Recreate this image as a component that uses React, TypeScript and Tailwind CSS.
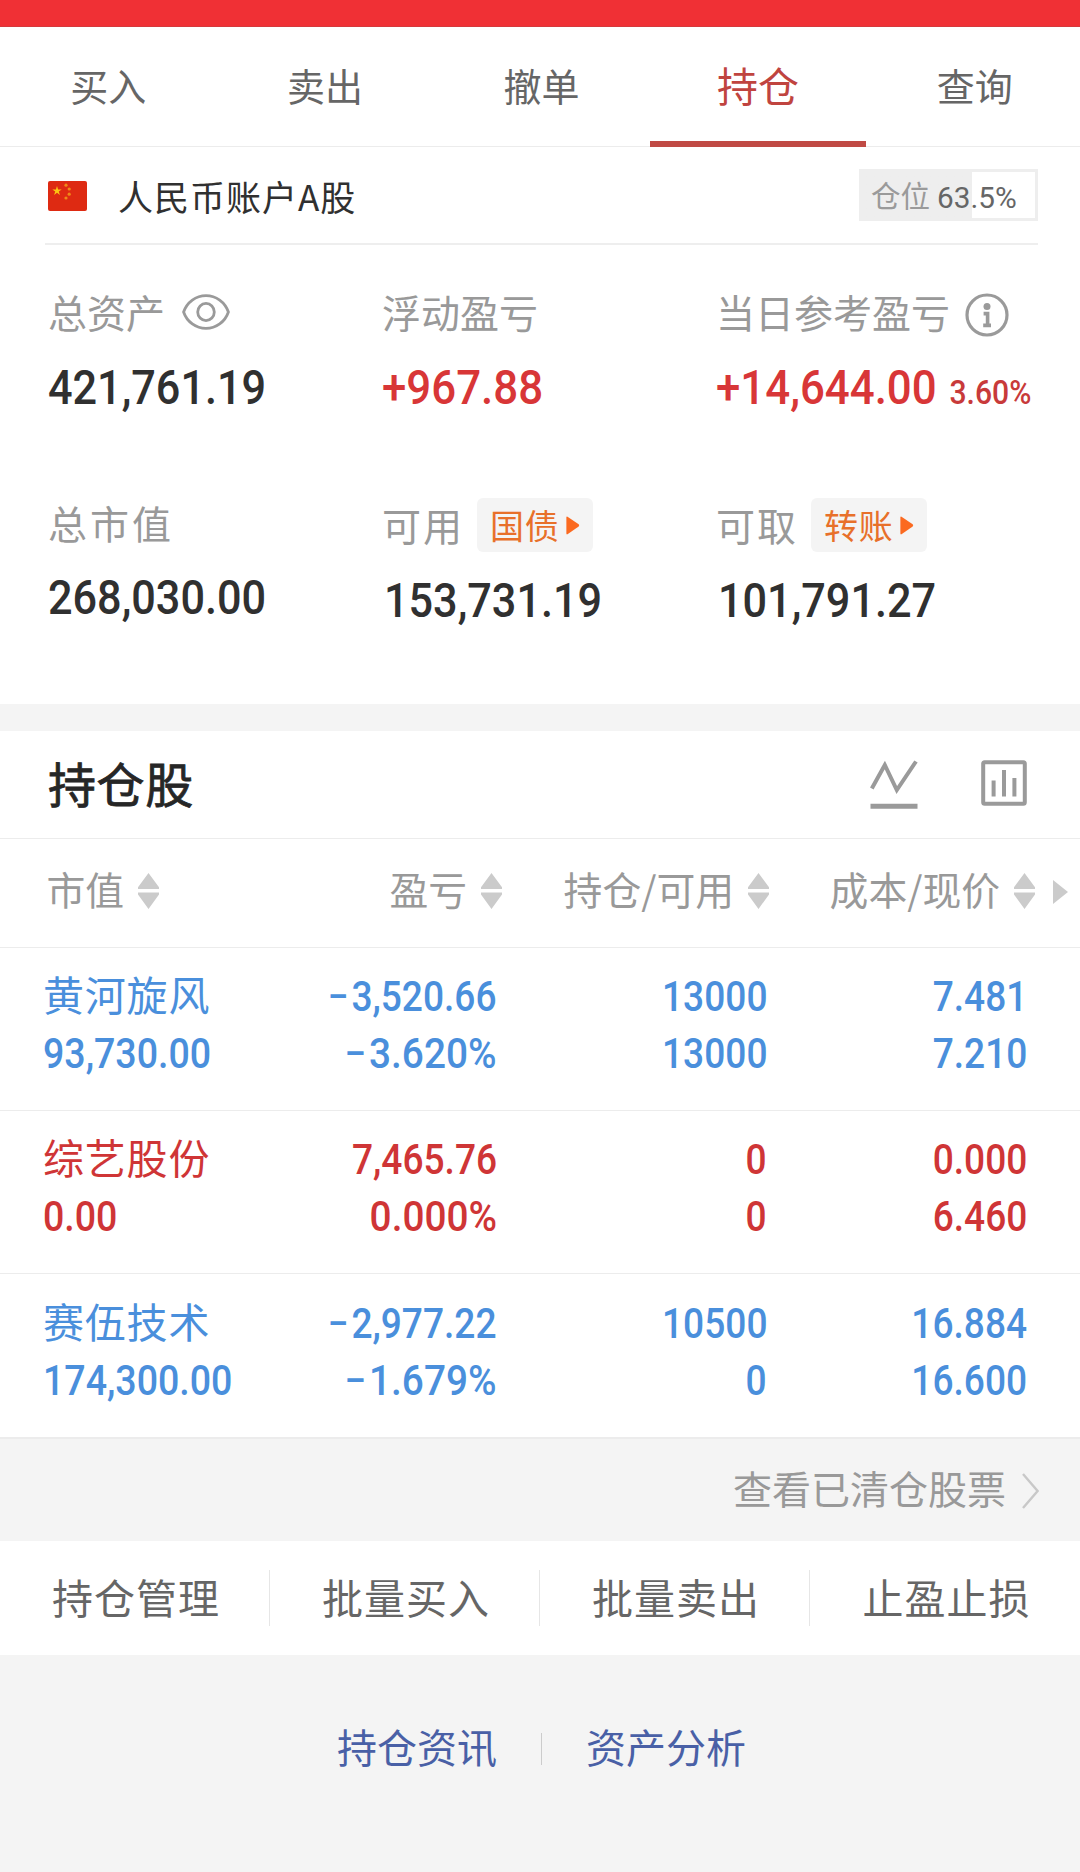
import type { ReactNode } from 'react';

const tabs = ['买入', '卖出', '撤单', '持仓', '查询'];

const columns = [
  { label: '市值', width: 'w-[159px]' },
  { label: '盈亏', width: 'w-[343px]' },
  { label: '持仓/可用', width: 'w-[267px]' },
  { label: '成本/现价', width: 'w-[266px]' },
];

const holdings = [
  {
    name: '黄河旋风',
    value: '93,730.00',
    profit: ['−3,520.66', '−3.620%'],
    amount: ['13000', '13000'],
    price: ['7.481', '7.210'],
    color: 'text-[#4a8fdc]',
  },
  {
    name: '综艺股份',
    value: '0.00',
    profit: ['7,465.76', '0.000%'],
    amount: ['0', '0'],
    price: ['0.000', '6.460'],
    color: 'text-[#cf3536]',
  },
  {
    name: '赛伍技术',
    value: '174,300.00',
    profit: ['−2,977.22', '−1.679%'],
    amount: ['10500', '0'],
    price: ['16.884', '16.600'],
    color: 'text-[#4a8fdc]',
  },
];

const actions = ['持仓管理', '批量买入', '批量卖出', '止盈止损'];

function Flag() {
  const star = '0,-1 0.2245,-0.309 0.951,-0.309 0.363,0.118 0.588,0.809 0,0.382 -0.588,0.809 -0.363,0.118 -0.951,-0.309 -0.2245,-0.309';
  return (
    <svg className="mt-px h-[30px] w-[39px]" viewBox="0 0 39 30">
      <rect width="39" height="30" rx="2" fill="#de2a12" />
      <polygon points={star} transform="translate(9 10) scale(4.9)" fill="#fcc512" />
      <g fill="#f08a17">
        <circle cx="18" cy="4.2" r="1.6" />
        <circle cx="21.2" cy="8" r="1.6" />
        <circle cx="21.2" cy="13.2" r="1.6" />
        <circle cx="18" cy="17" r="1.6" />
      </g>
    </svg>
  );
}

function Eye() {
  return (
    <svg className="mt-px ml-[17px] h-[36px] w-[48px]" viewBox="0 0 48 36" fill="none" stroke="#9a9a9a" strokeWidth="2.8">
      <path d="M1.6 18C5 8 14 1.6 24 1.6S43 8 46.4 18C43 28 34 34.4 24 34.4S5 28 1.6 18Z" />
      <ellipse cx="24" cy="18" rx="8.3" ry="8.6" />
    </svg>
  );
}

function Info() {
  return (
    <svg className="ml-[15px] h-[44px] w-[44px]" viewBox="0 0 44 44" fill="none">
      <circle cx="22" cy="22" r="20" stroke="#9a9a9a" strokeWidth="3.2" />
      <circle cx="22" cy="13.5" r="3.5" fill="#9a9a9a" />
      <path d="M18.6 20.6H22.6V32.4M18.2 32.4H26" stroke="#9a9a9a" strokeWidth="3.6" />
    </svg>
  );
}

function Sorter() {
  return (
    <svg className="-mt-[4px] ml-[14px] h-[36px] w-[21px] shrink-0" viewBox="0 0 21 36" fill="#cbcbcb">
      <path d="M10.5 0 21 14.2V16H0V14.2ZM0 19.6H21V21.4L10.5 36 0 21.4Z" />
    </svg>
  );
}

function Badge({ children }: { children: ReactNode }) {
  return (
    <span className="ml-[13px] flex h-[54px] w-[116px] items-center rounded-[6px] bg-[#f4f4f4] pl-[13px]">
      <span className="text-[34px] leading-[54px] tracking-[0.8px] text-[#e8702a]">{children}</span>
      <svg className="ml-[6px] h-[19px] w-[14px]" viewBox="0 0 14 20">
        <path d="M0 1.8Q0 0 1.6 1L13 8.8Q14 10 13 11L1.6 19Q0 20 0 18.2Z" fill="#fb6a20" />
      </svg>
    </span>
  );
}

function Amount({ children, tone = 'plain' }: { children: ReactNode; tone?: 'plain' | 'gain' }) {
  return (
    <div
      className={`flex w-max origin-left items-baseline whitespace-nowrap font-[Roboto] text-[48px] leading-[48px] font-medium ${
        tone === 'gain' ? 'scale-x-[0.913] text-[#d83637]' : 'scale-x-[0.9] text-[#303030]'
      }`}
    >
      {children}
    </div>
  );
}

function Pair({ values, width }: { values: string[]; width: string }) {
  return (
    <div className={`flex flex-col items-end ${width}`}>
      {values.map((v, i) => (
        <span
          key={i}
          className={`origin-right whitespace-nowrap font-[Roboto] text-[41.7px] leading-[57px] font-medium ${
            v.endsWith('%') ? 'scale-x-[0.93]' : 'scale-x-[0.89]'
          }`}
        >
          {v.startsWith('−') ? <span className="mr-[3px]">−</span> : null}
          {v.replace('−', '')}
        </span>
      ))}
    </div>
  );
}

export default function App() {
  return (
    <div className="h-[1872px] w-[1080px] overflow-hidden bg-[#f4f4f4] font-['Noto_Sans_CJK_SC',sans-serif] text-[#666]">
      <div className="h-[27px] border-b border-[#d5393c] bg-[#f03035]" />

      <nav className="grid h-[120px] grid-cols-[repeat(5,216.6px)] border-b border-[#ececec] bg-white">
        {tabs.map((t) =>
          t === '持仓' ? (
            <div key={t} className="h-[120px] border-b-[6px] border-[#c04a44] text-center text-[41px] leading-[114px] text-[#c0443f]">
              {t}
            </div>
          ) : (
            <div key={t} className="text-center text-[38px] leading-[116px]">
              {t}
            </div>
          ),
        )}
      </nav>

      <section className="h-[557px] bg-white">
        <div className="mx-[45px] flex h-[98px] w-[993px] items-center border-b-2 border-[#eee] pl-[3px]">
          <Flag />
          <span className="ml-[31px] pt-px text-[35px] leading-[96px] tracking-[1px] text-[#303030]">人民币账户A股</span>
          <div className="ml-auto flex h-[52px] w-[179px] border-[3px] border-[#eee] bg-linear-to-r from-[#eee] from-[63.5%] to-white to-[63.5%] pl-[9px] leading-[45px]">
            <span className="text-[29.5px] text-[#9a9a9a]">仓位</span>
            <span className="ml-[7px] font-[Roboto] text-[29.7px] leading-[51px]">63.5%</span>
          </div>
        </div>

        <div className="ml-[48px] grid grid-cols-[334px_334px_1fr] pt-[39px] text-[39px] text-[#999]">
          <div>
            <div className="flex h-[54px] items-center leading-[54px]">
              总资产
              <Eye />
            </div>
            <div className="mt-[26px]">
              <Amount>421,761.19</Amount>
            </div>
          </div>
          <div>
            <div className="h-[54px] leading-[54px]">浮动盈亏</div>
            <div className="mt-[26px]">
              <Amount tone="gain">+967.88</Amount>
            </div>
          </div>
          <div>
            <div className="flex h-[54px] items-center leading-[54px]">
              当日参考盈亏
              <span className="mt-[8px]">
                <Info />
              </span>
            </div>
            <div className="mt-[26px]">
              <Amount tone="gain">
                +14,644.00
                <span className="ml-[14px] text-[33px] text-[#c83a3a]">3.60%</span>
              </Amount>
            </div>
          </div>

          <div className="mt-[79px]">
            <div className="h-[54px] leading-[53px] tracking-[3px]">总市值</div>
            <div className="mt-[24px]">
              <Amount>268,030.00</Amount>
            </div>
          </div>
          <div className="mt-[81px]">
            <div className="flex h-[54px] items-center leading-[54px] tracking-[2px]">
              <span className="-mt-[2px]">可用</span>
              <Badge>国债</Badge>
            </div>
            <div className="mt-[25px] pl-[2px]">
              <Amount>153,731.19</Amount>
            </div>
          </div>
          <div className="mt-[81px]">
            <div className="flex h-[54px] items-center leading-[54px] tracking-[2px]">
              <span className="-mt-[2px]">可取</span>
              <Badge>转账</Badge>
            </div>
            <div className="mt-[25px] pl-[2px]">
              <Amount>101,791.27</Amount>
            </div>
          </div>
        </div>
      </section>

      <section className="mt-[27px] bg-white">
        <div className="flex h-[108px] items-center border-b border-[#ececec] pl-[48px]">
          <h2 className="-mt-[6px] text-[48px] leading-[102px] tracking-[0.6px] text-[#262626] [-webkit-text-stroke:0.8px_#262626]">持仓股</h2>
          <svg className="-mt-px ml-auto h-[49px] w-[48px]" viewBox="0 0 48 49" fill="none" stroke="#9a9a9a">
            <path d="M1.8 28.5 14.8 5 26.8 30 46 1.5" strokeWidth="4" />
            <path d="M0.5 46.2H47.5" strokeWidth="5" />
          </svg>
          <svg className="-mt-[3px] mr-[53px] ml-[63px] h-[46px] w-[46px]" viewBox="0 0 46 46" fill="none" stroke="#9a9a9a" strokeWidth="4">
            <rect x="2.2" y="2.2" width="41.6" height="41.6" rx="1.5" />
            <path d="M12.6 20.5V36.5M23 10V36.5M33.4 18V36.5" />
          </svg>
        </div>

        <div className="flex h-[109px] items-center border-b border-[#ececec] text-[38.8px] leading-[98px] text-[#999]">
          {columns.map((c) => (
            <div key={c.label} className={`flex items-center justify-end whitespace-nowrap ${c.width}`}>
              <span className="-mt-[11px]">{c.label}</span>
              <Sorter />
            </div>
          ))}
          <svg className="-mt-[2px] ml-[18px] h-[24px] w-[15px]" viewBox="0 0 15 24">
            <path d="M0 0 15 12 0 24Z" fill="#cbcbcb" />
          </svg>
        </div>

        {holdings.map((h) => (
          <div
            key={h.name}
            className={`flex h-[163px] border-b border-[#ececec] pt-[20px] pl-[43px] last:h-[165px] last:border-b-2 last:pt-[21px] ${h.color}`}
          >
            <div className="flex w-[200px] flex-col items-start">
              <span className="relative -top-[3px] text-[41px] leading-[57px] tracking-[0.8px] whitespace-nowrap">{h.name}</span>
              <span className="origin-left scale-x-[0.9] font-[Roboto] text-[41.7px] leading-[57px] font-medium">{h.value}</span>
            </div>
            <Pair values={h.profit} width="w-[254px]" />
            <Pair values={h.amount} width="w-[270px]" />
            <Pair values={h.price} width="w-[260px]" />
          </div>
        ))}
      </section>

      <div className="flex h-[102px] items-center justify-end pr-[41px] text-[39px] leading-[98px] text-[#999]">
        <span className="-mt-[6px]">查看已清仓股票</span>
        <svg className="mt-[2px] ml-[16px] h-[36px] w-[17px]" viewBox="0 0 17 36" fill="none" stroke="#c8c8c8" strokeWidth="2.4">
          <path d="M1 1 15.6 18 1 35" />
        </svg>
      </div>

      <div className="grid h-[114px] grid-cols-4 items-center bg-white text-center text-[41px]">
        {actions.map((a) => (
          <div key={a} className="h-[56px] border-r border-[#e6e6e6] pl-[3px] leading-[52px] tracking-[1px] last:border-r-0">
            {a}
          </div>
        ))}
      </div>

      <div className="mt-[71px] flex items-center pl-[337px] text-[40px] leading-[40px] text-[#4960a6]">
        <span>持仓资讯</span>
        <span className="mt-[5px] ml-[44px] h-[32px] w-px bg-[#ccc]" />
        <span className="ml-[44px]">资产分析</span>
      </div>
    </div>
  );
}
